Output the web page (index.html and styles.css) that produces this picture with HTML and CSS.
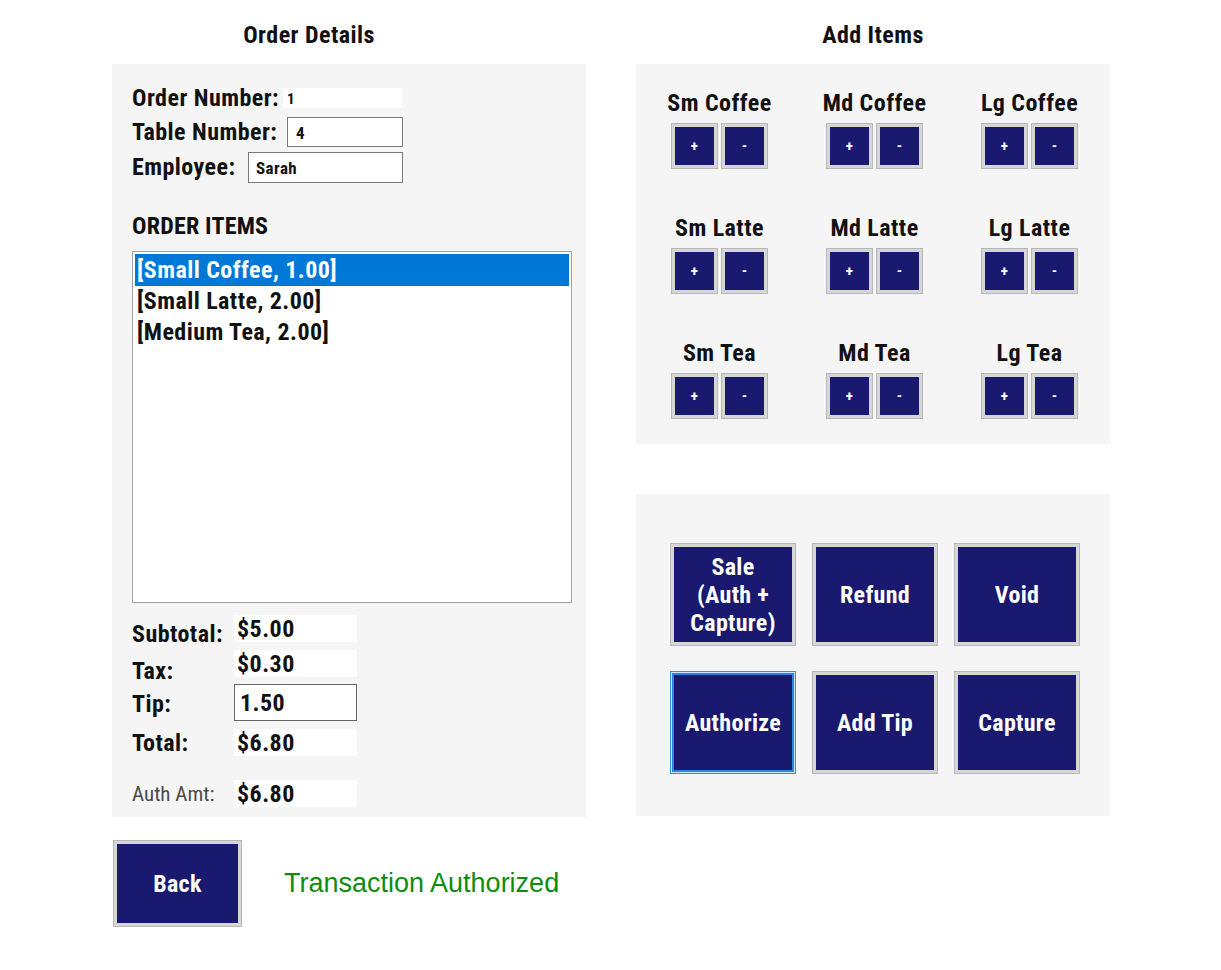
FILE: index.html
```html
<!DOCTYPE html>
<html lang="en">
<head>
<meta charset="utf-8">
<title>Order</title>
<link rel="stylesheet" href="styles.css">
</head>
<body>
<div class="page">
  <section class="col">
    <h2 class="col-title left-title">Order Details</h2>
    <div class="panel details">
      <div class="info-row r1"><span class="lbl">Order Number:</span><span class="valbox small">1</span></div>
      <div class="info-row r2"><span class="lbl">Table Number:</span><span class="input table-in">4</span></div>
      <div class="info-row r3"><span class="lbl">Employee:</span><span class="input emp-in">Sarah</span></div>
      <h3 class="items-title">ORDER ITEMS</h3>
      <div class="listbox">
        <div class="item selected">[Small Coffee, 1.00]</div>
        <div class="item">[Small Latte, 2.00]</div>
        <div class="item">[Medium Tea, 2.00]</div>
      </div>
      <div class="sum">
        <div class="sum-row s-sub"><span class="slbl off5">Subtotal:</span><span class="sval">$5.00</span></div>
        <div class="sum-row s-tax"><span class="slbl off7">Tax:</span><span class="sval">$0.30</span></div>
        <div class="sum-row s-tip"><span class="slbl off1">Tip:</span><span class="sval tipin">1.50</span></div>
        <div class="sum-row s-tot"><span class="slbl">Total:</span><span class="sval">$6.80</span></div>
        <div class="sum-row s-auth"><span class="slbl light">Auth Amt:</span><span class="sval">$6.80</span></div>
      </div>
    </div>
    <div class="bottom-row">
      <button class="btn back">Back</button>
      <span class="status">Transaction Authorized</span>
    </div>
  </section>
  <section class="col">
    <h2 class="col-title">Add Items</h2>
    <div class="panel items">
      <div class="prod"><div class="plbl">Sm Coffee</div><div class="pair"><button class="btn pm">+</button><button class="btn pm">-</button></div></div>
      <div class="prod"><div class="plbl">Md Coffee</div><div class="pair"><button class="btn pm">+</button><button class="btn pm">-</button></div></div>
      <div class="prod"><div class="plbl">Lg Coffee</div><div class="pair"><button class="btn pm">+</button><button class="btn pm">-</button></div></div>
      <div class="prod"><div class="plbl">Sm Latte</div><div class="pair"><button class="btn pm">+</button><button class="btn pm">-</button></div></div>
      <div class="prod"><div class="plbl">Md Latte</div><div class="pair"><button class="btn pm">+</button><button class="btn pm">-</button></div></div>
      <div class="prod"><div class="plbl">Lg Latte</div><div class="pair"><button class="btn pm">+</button><button class="btn pm">-</button></div></div>
      <div class="prod"><div class="plbl">Sm Tea</div><div class="pair"><button class="btn pm">+</button><button class="btn pm">-</button></div></div>
      <div class="prod"><div class="plbl">Md Tea</div><div class="pair"><button class="btn pm">+</button><button class="btn pm">-</button></div></div>
      <div class="prod"><div class="plbl">Lg Tea</div><div class="pair"><button class="btn pm">+</button><button class="btn pm">-</button></div></div>
    </div>
    <div class="panel actions">
      <button class="btn act">Sale<br>(Auth +<br>Capture)</button>
      <button class="btn act">Refund</button>
      <button class="btn act">Void</button>
      <button class="btn act focus">Authorize</button>
      <button class="btn act">Add Tip</button>
      <button class="btn act">Capture</button>
    </div>
  </section>
</div>
</body>
</html>
```
FILE: styles.css
```css
* { box-sizing: border-box; }
html, body { margin: 0; padding: 0; background: #ffffff; }
body {
  font-family: "Roboto Condensed", "Roboto", sans-serif;
  font-stretch: 75%;
  font-weight: bold;
  color: #111111;
  letter-spacing: 0.45px;
}
.page {
  display: grid;
  grid-template-columns: 474px 474px;
  column-gap: 50px;
  padding-left: 112px;
}
.col { display: flex; flex-direction: column; }
.col-title {
  margin: 0;
  height: 64px;
  padding-top: 6px;
  font-size: 24px;
  line-height: 58px;
  text-align: center;
  font-weight: bold;
}
.left-title { padding-right: 80px; }
.panel { background: #f5f5f5; }

/* details panel */
.details { padding: 0 0 0 20px; height: 753px; }
.info-row { display: flex; align-items: center; font-size: 24px; }
.r1 { margin-top: 22px; height: 24px; }
.r2 { margin-top: 4px; height: 36px; }
.r3 { height: 34px; }
.lbl { white-space: nowrap; }
.r1 .lbl { width: 151px; }
.r2 .lbl { width: 155px; }
.r3 .lbl { width: 116px; }
.valbox {
  background: #fff;
  width: 119px;
  height: 20px;
  padding-left: 4px;
  font-size: 15px;
  line-height: 23px;
}
.input {
  background: #fff;
  border: 1px solid #7a7a7a;
  font-size: 17px;
}
.table-in { width: 116px; height: 30px; line-height: 30px; padding-left: 8px; }
.emp-in { width: 155px; height: 31px; line-height: 31px; padding-left: 7px; }
.items-title {
  margin: 27px 0 0 0;
  font-size: 24px;
  line-height: 30px;
  font-weight: bold;
  letter-spacing: 0.2px;
}
.listbox {
  margin-top: 10px;
  width: 440px;
  height: 352px;
  background: #fff;
  border: 1px solid #a0a0a0;
  padding: 2px;
}
.item {
  height: 31px;
  line-height: 31px;
  font-size: 24px;
  padding-left: 2px;
}
.item.selected { background: #0078d7; color: #fff; height: 32px; line-height: 32px; }

.sum { margin-top: 12px; display: flex; flex-direction: column; }
.sum-row { display: flex; align-items: center; font-size: 24px; height: 27px; }
.slbl { width: 102px; white-space: nowrap; }
.off5 { padding-top: 11px; }
.off7 { padding-top: 15px; }
.off1 { padding-top: 3px; }
.light { font-weight: normal; font-size: 21px; color: #4a4a4a; letter-spacing: 0; }
.sval {
  width: 123px;
  height: 27px;
  background: #fff;
  padding-left: 3px;
  line-height: 29px;
}
.s-tax { margin-top: 8px; }
.s-tip { margin-top: 7px; height: 37px; }
.s-tot { margin-top: 8px; }
.s-auth { margin-top: 24px; }
.tipin { height: 37px; line-height: 36px; border: 1px solid #666; padding-left: 5px; }

/* buttons */
.btn {
  font-family: inherit;
  font-stretch: 75%;
  font-weight: bold;
  letter-spacing: 0.3px;
  color: #fff;
  background: #191970;
  border: 1px solid #b8b8b8;
  box-shadow: inset 0 0 0 3px #d6d6d6;
  padding: 0;
  margin: 0;
  cursor: pointer;
}
.bottom-row { display: flex; align-items: center; margin-top: 23px; }
.back { width: 129px; height: 87px; font-size: 24px; margin-left: 1px; }
.status {
  margin-left: 42px;
  font-family: "Liberation Sans", Arial, sans-serif;
  font-weight: normal;
  font-stretch: normal;
  letter-spacing: 0;
  font-size: 27px;
  color: #0e8c0e;
}

/* items panel */
.items {
  height: 380px;
  padding: 25px 0 0 6px;
  display: grid;
  grid-template-columns: repeat(3, 155px);
  grid-auto-rows: 80px;
  row-gap: 45px;
  align-content: start;
}
.prod { display: flex; flex-direction: column; align-items: center; }
.plbl { font-size: 24px; line-height: 28px; height: 28px; white-space: nowrap; }
.pair { display: flex; gap: 3px; margin-top: 6px; }
.pm { width: 47px; height: 46px; font-size: 15px; }

/* actions panel */
.actions {
  margin-top: 50px;
  height: 322px;
  padding: 49px 0 0 34px;
  display: grid;
  grid-template-columns: repeat(3, 126px);
  grid-template-rows: repeat(2, 103px);
  column-gap: 16px;
  row-gap: 25px;
  align-content: start;
}
.act { font-size: 24px; line-height: 28px; }
.act.focus {
  border: 1px solid #2f8ee0;
  box-shadow: inset 0 0 0 1px #cfe6fa, inset 0 0 0 3px #2a86dc;
}
```
